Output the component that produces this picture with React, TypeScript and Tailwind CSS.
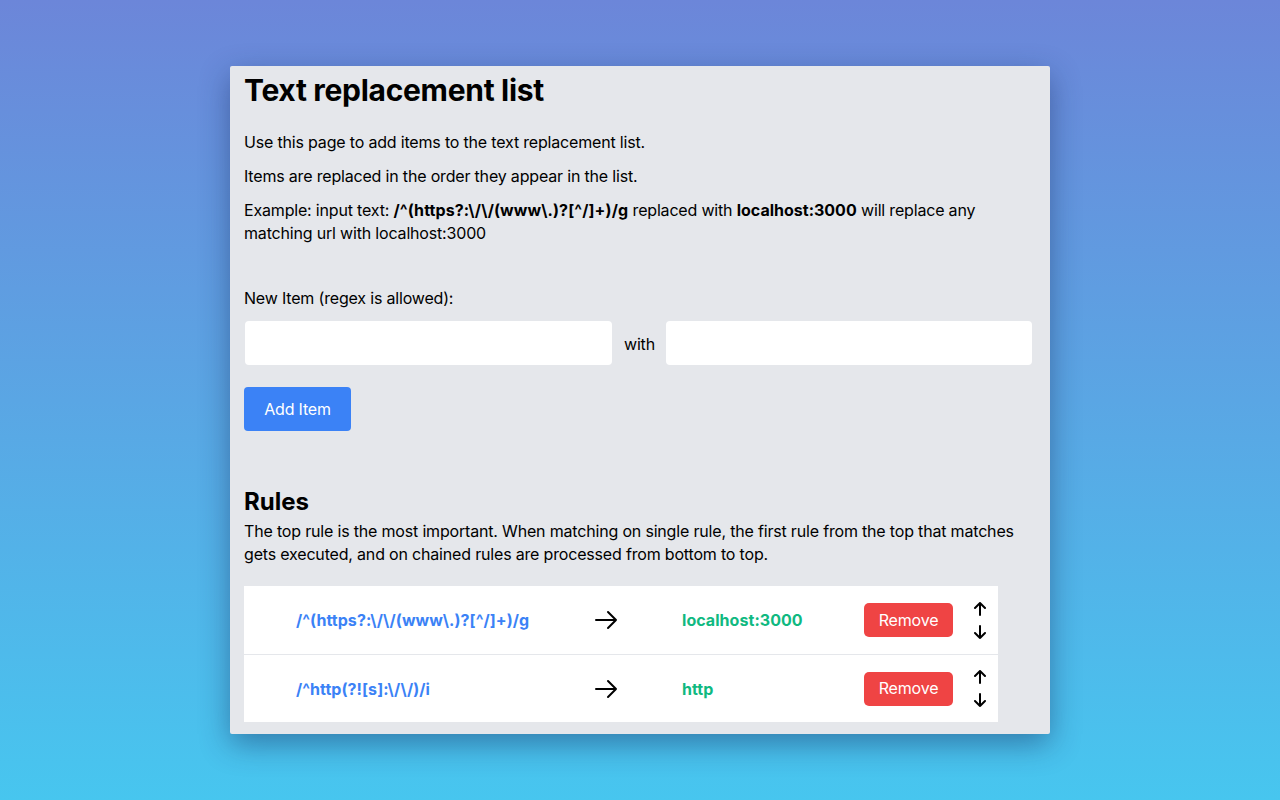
import React from "react";

const rules = [
  { from: "/^(https?:\\/\\/(www\\.)?[^/]+)/g", to: "localhost:3000" },
  { from: "/^http(?![s]:\\/\\/)/i", to: "http" },
];

const txt = "text-[16px] leading-[23px] tracking-[-0.18px]";

export default function App() {
  return (
    <div
      className="min-h-screen w-full flex items-center justify-center bg-[linear-gradient(180deg,#6c86d9_0%,#5aa6e4_50%,#47c6ef_100%)] text-black"
      style={{ fontFamily: "Inter, 'Noto Sans', sans-serif" }}
    >
      <div className="w-[820px] bg-[#e5e7eb] rounded-[2px] shadow-[0_10px_30px_rgba(20,40,90,0.45)] px-[14px] pt-[6px] pb-[12px]">
        <h1 className="text-[30px] leading-[36px] font-bold tracking-[-0.3px]">Text replacement list</h1>
        <p className={"mt-[23px] " + txt}>Use this page to add items to the text replacement list.</p>
        <p className={"mt-[11px] " + txt}>Items are replaced in the order they appear in the list.</p>
        <p className={"mt-[11px] " + txt}>
          Example: input text: <b className="tracking-[0.1px]">/^(https?:\/\/(www\.)?[^/]+)/g</b> replaced with <b className="tracking-normal">localhost:3000</b> will replace any matching url with localhost:3000
        </p>
        <p className={"mt-[42px] " + txt}>New Item (regex is allowed):</p>
        <div className="mt-[11px] flex items-center">
          <input className="ml-px w-[367px] h-[44px] bg-white rounded-[4px] outline-none px-3" />
          <span className={"ml-[12px] pt-[2px] " + txt}>with</span>
          <input className="ml-[11px] w-[366px] h-[44px] bg-white rounded-[4px] outline-none px-3" />
        </div>
        <button className={"mt-[22px] h-[44px] w-[107px] bg-[#3b82f6] rounded-[4px] text-white pt-[1px] " + txt}>Add Item</button>
        <h2 className="mt-[55px] text-[24px] leading-[32px] font-bold">Rules</h2>
        <p className={"mt-[2px] " + txt}>
          The top rule is the most important. When matching on single rule, the first rule from the top that matches gets executed, and on chained rules are processed from bottom to top.
        </p>
        <div className="mt-[20px] w-[754px] bg-white">
          {rules.map((r, i) => (
            <div key={i} className={"flex items-center " + (i === 0 ? "h-[69px] border-b border-[#e5e7eb]" : "h-[67px]")}>
              <div className="w-[330px] pl-[52px] text-[16px] tracking-[0.05px] font-bold text-[#3b82f6]">{r.from}</div>
              <div className="w-[64px] flex justify-center">
                <svg width="24" height="20" viewBox="0 0 24 20" fill="none" stroke="black" strokeWidth="2" strokeLinecap="round" strokeLinejoin="round">
                  <path d="M2 10h20M14 2l8 8-8 8" />
                </svg>
              </div>
              <div className="w-[226px] pl-[44px] text-[16px] tracking-[0.05px] font-bold text-[#10b981]">{r.to}</div>
              <button className={"w-[89px] h-[34px] bg-[#ef4444] rounded-[5px] text-white " + txt}>Remove</button>
              <div className="ml-[20px] flex flex-col items-center gap-[9px]">
                <svg width="14" height="14" viewBox="0 0 14 14" fill="none" stroke="black" strokeWidth="2" strokeLinecap="round" strokeLinejoin="round">
                  <path d="M7 13V1M2 6l5-5 5 5" />
                </svg>
                <svg width="14" height="14" viewBox="0 0 14 14" fill="none" stroke="black" strokeWidth="2" strokeLinecap="round" strokeLinejoin="round">
                  <path d="M7 1v12M2 8l5 5 5-5" />
                </svg>
              </div>
            </div>
          ))}
        </div>
      </div>
    </div>
  );
}
